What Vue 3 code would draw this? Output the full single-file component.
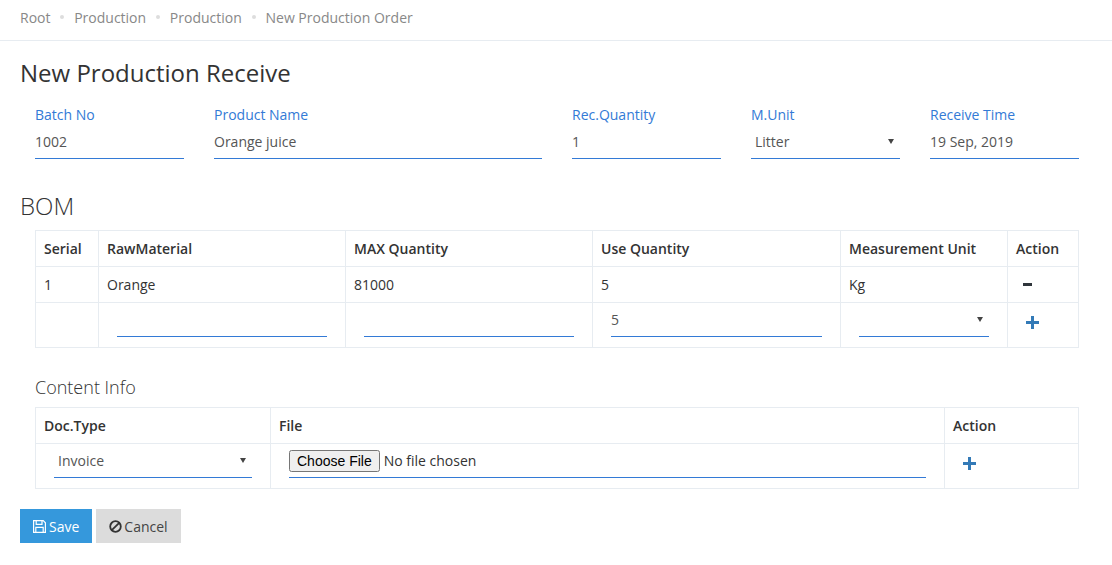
<script setup>
const crumbs = ['Root', 'Production', 'Production', 'New Production Order'];
</script>

<template>
  <div class="page">
    <div class="breadcrumb">
      <template v-for="(c, i) in crumbs" :key="i">
        <span v-if="i > 0" class="dot"></span>
        <span>{{ c }}</span>
      </template>
    </div>

    <h1 class="title">New Production Receive</h1>

    <div class="form-row">
      <div class="field w2">
        <label>Batch No</label>
        <input class="line" value="1002" />
      </div>
      <div class="field w4">
        <label>Product Name</label>
        <input class="line" value="Orange juice" />
      </div>
      <div class="field w2">
        <label>Rec.Quantity</label>
        <input class="line" value="1" />
      </div>
      <div class="field w2">
        <label>M.Unit</label>
        <div class="pick-wrap">
          <select class="line pick"><option>Litter</option></select>
        </div>
      </div>
      <div class="field w2">
        <label>Receive Time</label>
        <input class="line" value="19 Sep, 2019" />
      </div>
    </div>

    <h2 class="bom">BOM</h2>

    <div class="block">
      <table class="grid">
        <colgroup>
          <col style="width: 63px" />
          <col style="width: 247px" />
          <col style="width: 247px" />
          <col style="width: 248px" />
          <col style="width: 167px" />
          <col style="width: 71px" />
        </colgroup>
        <thead>
          <tr>
            <th>Serial</th>
            <th>RawMaterial</th>
            <th>MAX Quantity</th>
            <th>Use Quantity</th>
            <th>Measurement Unit</th>
            <th>Action</th>
          </tr>
        </thead>
        <tbody>
          <tr>
            <td>1</td>
            <td>Orange</td>
            <td>81000</td>
            <td>5</td>
            <td>Kg</td>
            <td class="act">
              <svg class="ico" width="9" height="3" viewBox="0 0 9 3"><rect width="9" height="3" fill="#2f353b" /></svg>
            </td>
          </tr>
          <tr class="edit">
            <td></td>
            <td><input class="line" /></td>
            <td><input class="line" /></td>
            <td><input class="line" value="5" /></td>
            <td>
              <div class="pick-wrap short">
                <select class="line pick"></select>
              </div>
            </td>
            <td class="act">
              <svg class="ico plus" width="13" height="13" viewBox="0 0 13 13"><path d="M5 0h3v5h5v3H8v5H5V8H0V5h5z" fill="#337ab7" /></svg>
            </td>
          </tr>
        </tbody>
      </table>

      <h3 class="sub">Content Info</h3>

      <table class="grid">
        <colgroup>
          <col style="width: 235px" />
          <col style="width: 674px" />
          <col style="width: 134px" />
        </colgroup>
        <thead>
          <tr>
            <th>Doc.Type</th>
            <th>File</th>
            <th>Action</th>
          </tr>
        </thead>
        <tbody>
          <tr class="edit">
            <td>
              <div class="pick-wrap">
                <select class="line pick"><option>Invoice</option></select>
              </div>
            </td>
            <td><input class="line filepick" type="file" /></td>
            <td class="act">
              <svg class="ico plus" width="13" height="13" viewBox="0 0 13 13"><path d="M5 0h3v5h5v3H8v5H5V8H0V5h5z" fill="#337ab7" /></svg>
            </td>
          </tr>
        </tbody>
      </table>
    </div>

    <div class="buttons">
      <button class="btn save" type="button">
        <svg width="13" height="13" viewBox="0 0 13 13" fill="none" stroke="#fff" stroke-width="1.2">
          <path d="M.6.6h9.6l2.2 2.2v9.6H.6z" />
          <path d="M3.2.8v3.6h5.8V.8M2.8 12.2V7.4h7.4v4.8" />
        </svg>
        Save
      </button>
      <button class="btn cancel" type="button">
        <svg width="13" height="13" viewBox="0 0 13 13" fill="none" stroke="#333" stroke-width="1.8">
          <circle cx="6.5" cy="6.5" r="5.3" />
          <path d="M2.8 10.2l7.4-7.4" />
        </svg>
        Cancel
      </button>
    </div>
  </div>
</template>

<style scoped>
.page {
  width: 1112px;
  height: 565px;
  overflow: hidden;
  background: #fff;
  font-family: "Open Sans", sans-serif;
  font-size: 14px;
  color: #333;
}
.breadcrumb {
  height: 41px;
  box-sizing: border-box;
  border-bottom: 1px solid #e7ecf1;
  padding: 0 0 6px 20px;
  display: flex;
  align-items: center;
  gap: 9.85px;
  color: #888;
}
.dot {
  width: 4px;
  height: 4px;
  border-radius: 50%;
  background: #ddd;
}
.title {
  margin: 16px 0 0 20px;
  font-size: 24px;
  line-height: 32px;
  font-weight: 400;
  color: #333;
}
.form-row {
  display: flex;
  margin: 16px 0 0 20px;
  width: 1074px;
}
.field {
  box-sizing: border-box;
  padding: 0 15px;
  display: flex;
  flex-direction: column;
}
.w2 {
  width: 179px;
}
.w4 {
  width: 358px;
}
.field label {
  color: #337ad6;
  line-height: 20px;
  height: 20px;
}
.line {
  display: block;
  width: 100%;
  box-sizing: border-box;
  height: 34px;
  border: 0;
  border-bottom: 1px solid #337ad6;
  border-radius: 0;
  background: transparent;
  padding: 0;
  margin: 0;
  font-family: "Open Sans", sans-serif;
  font-size: 14px;
  color: #555;
  outline: none;
}
.pick-wrap {
  position: relative;
}
.pick-wrap::after {
  content: "";
  position: absolute;
  right: 6px;
  top: 14px;
  border-left: 3px solid transparent;
  border-right: 3px solid transparent;
  border-top: 5px solid #444;
  pointer-events: none;
}
.pick {
  appearance: none;
  padding-left: 4px;
}
.short {
  width: 130px;
}
.bom {
  margin: 32px 0 0 20px;
  font-size: 24px;
  line-height: 30px;
  font-weight: 300;
  color: #333;
}
.block {
  margin: 9px 0 0 35px;
  width: 1044px;
}
.grid {
  width: 1044px;
  table-layout: fixed;
  border-collapse: collapse;
  border: 1px solid #e7ecf1;
}
.grid th,
.grid td {
  border: 1px solid #e7ecf1;
  padding: 8px;
  height: 36px;
  box-sizing: border-box;
  text-align: left;
  line-height: 19px;
  color: #333;
}
.grid th {
  font-weight: 600;
}
.grid .edit td {
  height: 45px;
  padding: 0 18px 10px;
  vertical-align: bottom;
}
.grid .act,
.grid .edit .act {
  padding-left: 15px;
}
.ico {
  display: block;
}
.plus {
  margin: 0 0 8px 3px;
}
.sub {
  margin: 27px 0 8px;
  font-size: 18px;
  line-height: 24px;
  font-weight: 300;
  color: #333;
}
.filepick {
  color: #333;
  padding-top: 6px;
}
.buttons {
  display: flex;
  gap: 4px;
  margin: 20px 0 0 20px;
}
.btn {
  height: 34px;
  border: 0;
  padding: 0 13px;
  font-family: "Open Sans", sans-serif;
  font-size: 14px;
  display: inline-flex;
  align-items: center;
  gap: 3px;
}
.save {
  background: #3598dc;
  color: #fff;
}
.cancel {
  background: #dcdcdc;
  color: #444;
  gap: 2px;
}
</style>
